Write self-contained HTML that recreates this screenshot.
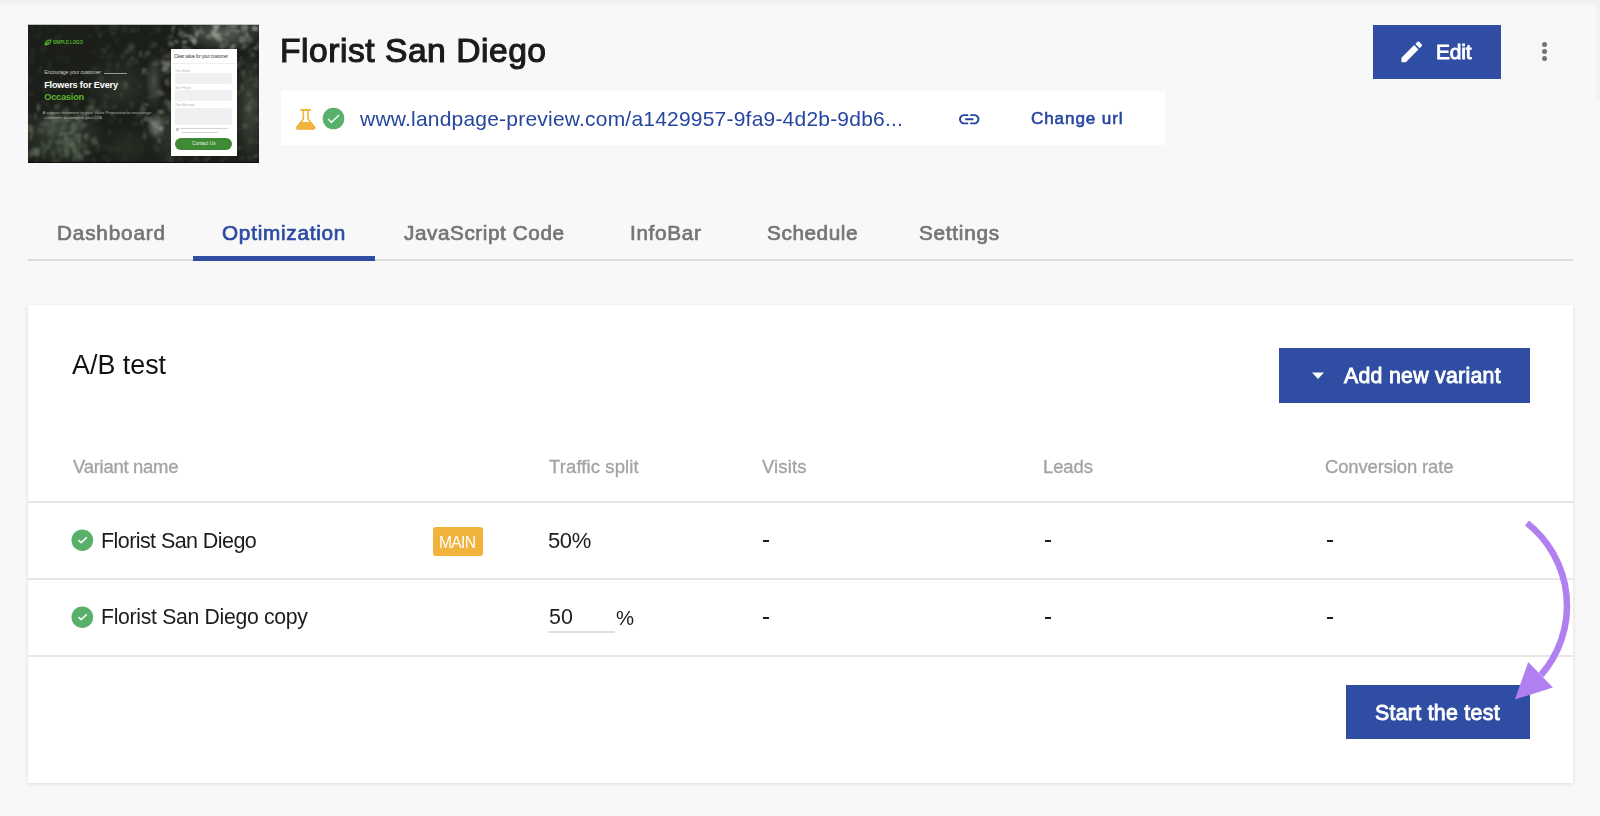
<!DOCTYPE html>
<html><head><meta charset="utf-8">
<style>
*{margin:0;padding:0;box-sizing:border-box}
html,body{width:1600px;height:816px;overflow:hidden;background:#f8f8f8;font-family:"Liberation Sans",sans-serif}
.a{position:absolute}
.t{position:absolute;white-space:nowrap;will-change:transform}
.btn{position:absolute;background:#2f4ea3}
</style></head>
<body>
<!-- thumbnail -->
<div class="a" id="thumb" style="left:28px;top:24px;width:231px;height:139px;background:#1b1e19;overflow:hidden">
 <div class="a" style="left:0;top:0;width:231px;height:139px;background:
  radial-gradient(ellipse 10px 14px at 128px 102px, rgba(205,210,205,.55), transparent),
  radial-gradient(ellipse 9px 30px at 126px 58px, rgba(150,160,155,.35), transparent),
  radial-gradient(ellipse 42px 18px at 195px 10px, rgba(165,172,160,.45), transparent),
  radial-gradient(ellipse 16px 60px at 222px 85px, rgba(105,120,100,.45), transparent),
  radial-gradient(ellipse 45px 32px at 35px 112px, rgba(85,100,80,.5), transparent),
  radial-gradient(ellipse 16px 12px at 22px 102px, rgba(120,135,140,.35), transparent),
  radial-gradient(ellipse 38px 32px at 92px 62px, rgba(72,82,66,.4), transparent),
  radial-gradient(ellipse 28px 22px at 100px 122px, rgba(62,76,56,.35), transparent),
  radial-gradient(ellipse 20px 40px at 140px 110px, rgba(80,95,80,.35), transparent)"></div>
 <svg class="a" style="left:0;top:0;filter:blur(.9px)" width="231" height="139" viewBox="0 0 231 139"><ellipse cx="22.7" cy="6.0" rx="3.1" ry="1.7" fill="rgba(70,80,65,0.15)"/><ellipse cx="25.6" cy="2.3" rx="2.8" ry="1.6" fill="rgba(70,80,65,0.14)"/><ellipse cx="4.9" cy="3.6" rx="2.6" ry="3.6" fill="rgba(70,80,65,0.10)"/><ellipse cx="15.6" cy="25.1" rx="3.9" ry="2.9" fill="rgba(70,80,65,0.14)"/><ellipse cx="68.3" cy="1.9" rx="3.6" ry="2.2" fill="rgba(70,80,65,0.11)"/><ellipse cx="8.2" cy="12.3" rx="3.5" ry="2.0" fill="rgba(70,80,65,0.16)"/><ellipse cx="44.7" cy="14.9" rx="2.9" ry="1.7" fill="rgba(70,80,65,0.10)"/><ellipse cx="14.4" cy="27.2" rx="2.6" ry="2.3" fill="rgba(70,80,65,0.16)"/><ellipse cx="31.7" cy="12.0" rx="3.5" ry="3.2" fill="rgba(70,80,65,0.12)"/><ellipse cx="40.2" cy="21.0" rx="3.7" ry="3.3" fill="rgba(70,80,65,0.12)"/><ellipse cx="68.6" cy="4.7" rx="2.5" ry="3.4" fill="rgba(70,80,65,0.11)"/><ellipse cx="34.2" cy="1.6" rx="3.2" ry="3.4" fill="rgba(70,80,65,0.16)"/><ellipse cx="61.3" cy="12.5" rx="3.2" ry="3.0" fill="rgba(70,80,65,0.16)"/><ellipse cx="31.9" cy="33.6" rx="3.9" ry="2.7" fill="rgba(70,80,65,0.17)"/><ellipse cx="4.2" cy="28.1" rx="3.1" ry="4.0" fill="rgba(70,80,65,0.19)"/><ellipse cx="19.9" cy="15.4" rx="3.2" ry="1.6" fill="rgba(70,80,65,0.15)"/><ellipse cx="11.8" cy="4.7" rx="1.6" ry="3.4" fill="rgba(70,80,65,0.11)"/><ellipse cx="17.3" cy="15.6" rx="3.7" ry="1.7" fill="rgba(70,80,65,0.14)"/><ellipse cx="38.5" cy="35.3" rx="3.5" ry="3.7" fill="rgba(70,80,65,0.12)"/><ellipse cx="29.1" cy="14.4" rx="3.7" ry="3.9" fill="rgba(70,80,65,0.11)"/><ellipse cx="12.3" cy="9.3" rx="2.1" ry="2.7" fill="rgba(70,80,65,0.16)"/><ellipse cx="18.4" cy="0.2" rx="2.5" ry="2.4" fill="rgba(70,80,65,0.16)"/><ellipse cx="66.7" cy="27.6" rx="2.8" ry="3.0" fill="rgba(70,80,65,0.17)"/><ellipse cx="3.8" cy="36.0" rx="3.4" ry="3.7" fill="rgba(70,80,65,0.19)"/><ellipse cx="27.5" cy="16.0" rx="1.8" ry="3.1" fill="rgba(70,80,65,0.10)"/><ellipse cx="74.9" cy="8.4" rx="1.9" ry="2.4" fill="rgba(90,100,85,0.13)"/><ellipse cx="70.0" cy="6.1" rx="1.8" ry="2.4" fill="rgba(90,100,85,0.12)"/><ellipse cx="133.8" cy="24.6" rx="1.9" ry="2.1" fill="rgba(90,100,85,0.17)"/><ellipse cx="96.6" cy="4.9" rx="3.6" ry="4.0" fill="rgba(90,100,85,0.19)"/><ellipse cx="105.3" cy="3.4" rx="1.8" ry="2.4" fill="rgba(90,100,85,0.16)"/><ellipse cx="130.5" cy="6.5" rx="1.6" ry="3.9" fill="rgba(90,100,85,0.20)"/><ellipse cx="80.7" cy="21.7" rx="1.6" ry="2.8" fill="rgba(90,100,85,0.27)"/><ellipse cx="133.0" cy="27.8" rx="2.2" ry="2.4" fill="rgba(90,100,85,0.15)"/><ellipse cx="126.4" cy="21.3" rx="3.4" ry="2.3" fill="rgba(90,100,85,0.15)"/><ellipse cx="129.2" cy="39.4" rx="3.6" ry="3.5" fill="rgba(90,100,85,0.24)"/><ellipse cx="124.0" cy="9.1" rx="2.8" ry="2.4" fill="rgba(90,100,85,0.12)"/><ellipse cx="72.0" cy="11.2" rx="2.1" ry="3.2" fill="rgba(90,100,85,0.26)"/><ellipse cx="102.6" cy="37.5" rx="4.0" ry="3.9" fill="rgba(90,100,85,0.17)"/><ellipse cx="86.1" cy="9.1" rx="2.0" ry="2.0" fill="rgba(90,100,85,0.21)"/><ellipse cx="135.7" cy="33.6" rx="2.7" ry="3.1" fill="rgba(90,100,85,0.24)"/><ellipse cx="76.2" cy="26.4" rx="3.8" ry="3.5" fill="rgba(90,100,85,0.23)"/><ellipse cx="104.9" cy="7.1" rx="3.5" ry="2.3" fill="rgba(90,100,85,0.24)"/><ellipse cx="140.9" cy="15.8" rx="2.5" ry="3.9" fill="rgba(90,100,85,0.23)"/><ellipse cx="82.4" cy="5.1" rx="1.9" ry="3.8" fill="rgba(90,100,85,0.24)"/><ellipse cx="80.7" cy="33.1" rx="4.0" ry="3.1" fill="rgba(90,100,85,0.17)"/><ellipse cx="110.1" cy="5.2" rx="1.5" ry="3.9" fill="rgba(90,100,85,0.22)"/><ellipse cx="108.4" cy="37.3" rx="2.6" ry="3.7" fill="rgba(90,100,85,0.24)"/><ellipse cx="85.4" cy="10.1" rx="2.2" ry="2.1" fill="rgba(90,100,85,0.21)"/><ellipse cx="88.9" cy="16.8" rx="1.8" ry="3.8" fill="rgba(90,100,85,0.17)"/><ellipse cx="103.4" cy="23.3" rx="3.8" ry="2.6" fill="rgba(90,100,85,0.26)"/><ellipse cx="106.6" cy="21.3" rx="2.8" ry="1.5" fill="rgba(90,100,85,0.19)"/><ellipse cx="83.4" cy="0.2" rx="3.5" ry="1.9" fill="rgba(90,100,85,0.19)"/><ellipse cx="122.9" cy="22.3" rx="2.3" ry="2.8" fill="rgba(90,100,85,0.20)"/><ellipse cx="127.3" cy="4.2" rx="2.9" ry="2.1" fill="rgba(90,100,85,0.16)"/><ellipse cx="126.4" cy="20.3" rx="2.9" ry="3.4" fill="rgba(90,100,85,0.26)"/><ellipse cx="102.4" cy="24.5" rx="2.8" ry="2.8" fill="rgba(90,100,85,0.22)"/><ellipse cx="103.0" cy="21.3" rx="2.7" ry="3.9" fill="rgba(90,100,85,0.22)"/><ellipse cx="134.0" cy="37.7" rx="2.1" ry="2.9" fill="rgba(90,100,85,0.26)"/><ellipse cx="131.3" cy="5.5" rx="1.8" ry="2.6" fill="rgba(90,100,85,0.13)"/><ellipse cx="87.6" cy="2.9" rx="3.2" ry="3.5" fill="rgba(90,100,85,0.25)"/><ellipse cx="156.6" cy="17.9" rx="3.0" ry="1.4" fill="rgba(180,185,175,0.42)"/><ellipse cx="228.1" cy="5.5" rx="3.9" ry="2.2" fill="rgba(180,185,175,0.33)"/><ellipse cx="230.1" cy="20.8" rx="1.5" ry="2.3" fill="rgba(180,185,175,0.33)"/><ellipse cx="172.8" cy="4.9" rx="2.0" ry="3.2" fill="rgba(180,185,175,0.21)"/><ellipse cx="191.8" cy="11.0" rx="1.1" ry="2.0" fill="rgba(180,185,175,0.36)"/><ellipse cx="188.1" cy="1.6" rx="4.0" ry="3.4" fill="rgba(180,185,175,0.44)"/><ellipse cx="152.2" cy="6.6" rx="1.1" ry="3.3" fill="rgba(180,185,175,0.27)"/><ellipse cx="154.4" cy="10.6" rx="3.7" ry="3.5" fill="rgba(180,185,175,0.27)"/><ellipse cx="156.1" cy="23.0" rx="2.7" ry="3.1" fill="rgba(180,185,175,0.23)"/><ellipse cx="148.1" cy="17.2" rx="2.3" ry="1.2" fill="rgba(180,185,175,0.44)"/><ellipse cx="198.8" cy="20.0" rx="1.3" ry="3.6" fill="rgba(180,185,175,0.23)"/><ellipse cx="218.9" cy="11.3" rx="2.0" ry="2.7" fill="rgba(180,185,175,0.43)"/><ellipse cx="166.6" cy="3.2" rx="2.6" ry="1.7" fill="rgba(180,185,175,0.24)"/><ellipse cx="157.2" cy="1.3" rx="1.6" ry="1.9" fill="rgba(180,185,175,0.28)"/><ellipse cx="209.8" cy="7.2" rx="2.5" ry="1.5" fill="rgba(180,185,175,0.29)"/><ellipse cx="144.6" cy="6.3" rx="1.0" ry="3.2" fill="rgba(180,185,175,0.34)"/><ellipse cx="159.7" cy="11.9" rx="3.8" ry="1.3" fill="rgba(180,185,175,0.41)"/><ellipse cx="181.0" cy="12.4" rx="3.5" ry="2.2" fill="rgba(180,185,175,0.33)"/><ellipse cx="203.5" cy="24.6" rx="2.0" ry="3.5" fill="rgba(180,185,175,0.38)"/><ellipse cx="199.0" cy="10.1" rx="2.0" ry="1.2" fill="rgba(180,185,175,0.24)"/><ellipse cx="149.2" cy="18.5" rx="1.8" ry="1.5" fill="rgba(180,185,175,0.23)"/><ellipse cx="217.0" cy="21.8" rx="3.0" ry="1.8" fill="rgba(180,185,175,0.27)"/><ellipse cx="168.8" cy="11.5" rx="1.5" ry="2.3" fill="rgba(180,185,175,0.27)"/><ellipse cx="227.6" cy="24.3" rx="2.6" ry="1.7" fill="rgba(180,185,175,0.44)"/><ellipse cx="170.2" cy="8.9" rx="1.0" ry="2.1" fill="rgba(180,185,175,0.32)"/><ellipse cx="187.2" cy="5.0" rx="2.5" ry="1.0" fill="rgba(180,185,175,0.27)"/><ellipse cx="150.9" cy="10.0" rx="1.1" ry="1.1" fill="rgba(180,185,175,0.28)"/><ellipse cx="163.5" cy="14.6" rx="2.6" ry="3.3" fill="rgba(180,185,175,0.37)"/><ellipse cx="206.0" cy="22.0" rx="2.2" ry="2.0" fill="rgba(180,185,175,0.45)"/><ellipse cx="156.2" cy="18.1" rx="2.9" ry="1.1" fill="rgba(180,185,175,0.41)"/><ellipse cx="221.5" cy="15.7" rx="3.2" ry="3.4" fill="rgba(180,185,175,0.24)"/><ellipse cx="189.1" cy="12.6" rx="3.5" ry="3.4" fill="rgba(180,185,175,0.41)"/><ellipse cx="194.4" cy="22.3" rx="3.0" ry="3.1" fill="rgba(180,185,175,0.27)"/><ellipse cx="145.7" cy="3.3" rx="2.1" ry="1.3" fill="rgba(180,185,175,0.41)"/><ellipse cx="192.2" cy="15.7" rx="2.9" ry="3.0" fill="rgba(180,185,175,0.33)"/><ellipse cx="143.3" cy="19.9" rx="3.2" ry="2.5" fill="rgba(180,185,175,0.34)"/><ellipse cx="201.0" cy="1.7" rx="3.2" ry="1.8" fill="rgba(180,185,175,0.23)"/><ellipse cx="166.4" cy="18.2" rx="1.6" ry="3.2" fill="rgba(180,185,175,0.44)"/><ellipse cx="186.5" cy="9.6" rx="2.4" ry="3.1" fill="rgba(180,185,175,0.39)"/><ellipse cx="197.3" cy="16.1" rx="1.2" ry="1.4" fill="rgba(180,185,175,0.27)"/><ellipse cx="208.4" cy="7.6" rx="2.7" ry="1.0" fill="rgba(180,185,175,0.22)"/><ellipse cx="166.7" cy="16.8" rx="3.1" ry="3.0" fill="rgba(180,185,175,0.28)"/><ellipse cx="188.5" cy="11.6" rx="2.4" ry="1.4" fill="rgba(180,185,175,0.42)"/><ellipse cx="160.5" cy="24.5" rx="3.8" ry="1.1" fill="rgba(180,185,175,0.32)"/><ellipse cx="215.2" cy="24.2" rx="2.3" ry="1.8" fill="rgba(180,185,175,0.26)"/><ellipse cx="226.2" cy="5.3" rx="2.7" ry="1.4" fill="rgba(180,185,175,0.34)"/><ellipse cx="226.8" cy="3.3" rx="3.5" ry="2.5" fill="rgba(180,185,175,0.42)"/><ellipse cx="204.9" cy="5.8" rx="3.7" ry="2.5" fill="rgba(180,185,175,0.22)"/><ellipse cx="143.3" cy="12.3" rx="2.4" ry="1.9" fill="rgba(180,185,175,0.24)"/><ellipse cx="173.3" cy="7.9" rx="3.5" ry="1.0" fill="rgba(180,185,175,0.39)"/><ellipse cx="216.8" cy="3.0" rx="3.8" ry="3.1" fill="rgba(180,185,175,0.43)"/><ellipse cx="168.5" cy="9.3" rx="2.2" ry="4.0" fill="rgba(180,185,175,0.35)"/><ellipse cx="174.7" cy="10.7" rx="1.8" ry="1.1" fill="rgba(180,185,175,0.23)"/><ellipse cx="216.5" cy="7.1" rx="3.8" ry="1.7" fill="rgba(180,185,175,0.27)"/><ellipse cx="188.0" cy="4.7" rx="2.1" ry="3.9" fill="rgba(180,185,175,0.42)"/><ellipse cx="214.5" cy="15.8" rx="3.7" ry="3.8" fill="rgba(180,185,175,0.34)"/><ellipse cx="206.3" cy="1.2" rx="3.2" ry="2.4" fill="rgba(180,185,175,0.39)"/><ellipse cx="199.7" cy="7.2" rx="1.1" ry="3.8" fill="rgba(180,185,175,0.24)"/><ellipse cx="184.6" cy="8.6" rx="1.9" ry="3.2" fill="rgba(180,185,175,0.44)"/><ellipse cx="165.9" cy="16.4" rx="1.9" ry="2.7" fill="rgba(180,185,175,0.30)"/><ellipse cx="11.7" cy="46.8" rx="2.0" ry="3.8" fill="rgba(75,88,70,0.19)"/><ellipse cx="15.4" cy="78.1" rx="4.0" ry="2.6" fill="rgba(75,88,70,0.14)"/><ellipse cx="13.5" cy="43.8" rx="2.4" ry="1.7" fill="rgba(75,88,70,0.16)"/><ellipse cx="18.1" cy="63.9" rx="3.7" ry="3.4" fill="rgba(75,88,70,0.18)"/><ellipse cx="29.0" cy="62.0" rx="2.4" ry="2.3" fill="rgba(75,88,70,0.13)"/><ellipse cx="19.4" cy="80.6" rx="1.8" ry="2.8" fill="rgba(75,88,70,0.21)"/><ellipse cx="60.4" cy="49.1" rx="2.2" ry="2.1" fill="rgba(75,88,70,0.18)"/><ellipse cx="31.2" cy="80.1" rx="3.6" ry="3.7" fill="rgba(75,88,70,0.12)"/><ellipse cx="2.3" cy="69.8" rx="3.7" ry="2.7" fill="rgba(75,88,70,0.21)"/><ellipse cx="0.0" cy="56.4" rx="3.8" ry="3.6" fill="rgba(75,88,70,0.25)"/><ellipse cx="68.1" cy="50.4" rx="1.8" ry="1.9" fill="rgba(75,88,70,0.20)"/><ellipse cx="47.7" cy="79.5" rx="3.3" ry="3.1" fill="rgba(75,88,70,0.23)"/><ellipse cx="32.0" cy="63.2" rx="1.6" ry="3.5" fill="rgba(75,88,70,0.15)"/><ellipse cx="64.4" cy="67.1" rx="2.3" ry="1.8" fill="rgba(75,88,70,0.16)"/><ellipse cx="44.5" cy="69.3" rx="1.8" ry="1.7" fill="rgba(75,88,70,0.20)"/><ellipse cx="40.8" cy="56.3" rx="2.1" ry="3.0" fill="rgba(75,88,70,0.12)"/><ellipse cx="21.1" cy="59.3" rx="3.9" ry="3.1" fill="rgba(75,88,70,0.25)"/><ellipse cx="33.3" cy="49.9" rx="2.1" ry="3.9" fill="rgba(75,88,70,0.23)"/><ellipse cx="21.5" cy="40.9" rx="2.7" ry="3.2" fill="rgba(75,88,70,0.18)"/><ellipse cx="18.0" cy="68.0" rx="3.8" ry="2.1" fill="rgba(75,88,70,0.13)"/><ellipse cx="23.7" cy="57.7" rx="3.2" ry="2.0" fill="rgba(75,88,70,0.24)"/><ellipse cx="51.7" cy="61.2" rx="2.0" ry="3.9" fill="rgba(75,88,70,0.17)"/><ellipse cx="57.4" cy="49.7" rx="2.1" ry="3.4" fill="rgba(75,88,70,0.16)"/><ellipse cx="66.6" cy="60.8" rx="2.0" ry="2.1" fill="rgba(75,88,70,0.18)"/><ellipse cx="46.6" cy="79.8" rx="1.9" ry="2.5" fill="rgba(75,88,70,0.15)"/><ellipse cx="68.2" cy="46.0" rx="1.6" ry="1.7" fill="rgba(75,88,70,0.18)"/><ellipse cx="62.9" cy="77.1" rx="3.3" ry="4.0" fill="rgba(75,88,70,0.26)"/><ellipse cx="23.0" cy="47.8" rx="3.8" ry="3.4" fill="rgba(75,88,70,0.12)"/><ellipse cx="46.5" cy="55.9" rx="2.4" ry="2.3" fill="rgba(75,88,70,0.15)"/><ellipse cx="0.2" cy="51.8" rx="2.4" ry="3.9" fill="rgba(75,88,70,0.14)"/><ellipse cx="140.2" cy="37.4" rx="2.4" ry="3.6" fill="rgba(95,108,90,0.27)"/><ellipse cx="98.7" cy="28.0" rx="2.7" ry="2.4" fill="rgba(95,108,90,0.29)"/><ellipse cx="80.1" cy="46.9" rx="3.7" ry="1.6" fill="rgba(95,108,90,0.19)"/><ellipse cx="128.3" cy="71.0" rx="1.6" ry="1.6" fill="rgba(95,108,90,0.13)"/><ellipse cx="136.8" cy="40.4" rx="3.4" ry="3.7" fill="rgba(95,108,90,0.18)"/><ellipse cx="86.2" cy="82.5" rx="3.0" ry="2.2" fill="rgba(95,108,90,0.25)"/><ellipse cx="89.7" cy="41.5" rx="1.5" ry="3.4" fill="rgba(95,108,90,0.28)"/><ellipse cx="114.5" cy="81.6" rx="1.6" ry="2.1" fill="rgba(95,108,90,0.21)"/><ellipse cx="139.6" cy="82.2" rx="2.5" ry="2.1" fill="rgba(95,108,90,0.20)"/><ellipse cx="103.5" cy="80.7" rx="2.0" ry="3.5" fill="rgba(95,108,90,0.25)"/><ellipse cx="129.2" cy="71.4" rx="3.0" ry="2.3" fill="rgba(95,108,90,0.18)"/><ellipse cx="93.2" cy="71.9" rx="1.7" ry="2.0" fill="rgba(95,108,90,0.26)"/><ellipse cx="84.3" cy="28.9" rx="1.6" ry="2.9" fill="rgba(95,108,90,0.18)"/><ellipse cx="141.5" cy="78.0" rx="4.0" ry="2.2" fill="rgba(95,108,90,0.14)"/><ellipse cx="72.5" cy="54.9" rx="3.3" ry="2.6" fill="rgba(95,108,90,0.16)"/><ellipse cx="97.5" cy="62.2" rx="3.2" ry="3.4" fill="rgba(95,108,90,0.27)"/><ellipse cx="116.8" cy="32.3" rx="3.6" ry="2.2" fill="rgba(95,108,90,0.22)"/><ellipse cx="94.1" cy="69.3" rx="2.0" ry="2.1" fill="rgba(95,108,90,0.16)"/><ellipse cx="77.0" cy="78.1" rx="2.9" ry="2.3" fill="rgba(95,108,90,0.19)"/><ellipse cx="142.4" cy="55.4" rx="2.1" ry="3.5" fill="rgba(95,108,90,0.24)"/><ellipse cx="142.3" cy="31.1" rx="2.7" ry="3.5" fill="rgba(95,108,90,0.27)"/><ellipse cx="136.3" cy="27.4" rx="2.2" ry="1.8" fill="rgba(95,108,90,0.15)"/><ellipse cx="140.9" cy="60.0" rx="3.8" ry="2.4" fill="rgba(95,108,90,0.28)"/><ellipse cx="100.0" cy="40.6" rx="3.4" ry="3.9" fill="rgba(95,108,90,0.14)"/><ellipse cx="111.5" cy="62.2" rx="2.0" ry="2.4" fill="rgba(95,108,90,0.15)"/><ellipse cx="80.9" cy="40.3" rx="3.0" ry="3.1" fill="rgba(95,108,90,0.16)"/><ellipse cx="65.9" cy="44.6" rx="3.2" ry="2.0" fill="rgba(95,108,90,0.18)"/><ellipse cx="80.9" cy="72.7" rx="2.9" ry="1.7" fill="rgba(95,108,90,0.14)"/><ellipse cx="95.8" cy="58.0" rx="3.1" ry="1.7" fill="rgba(95,108,90,0.15)"/><ellipse cx="119.2" cy="49.6" rx="2.2" ry="2.3" fill="rgba(95,108,90,0.29)"/><ellipse cx="89.4" cy="59.0" rx="2.4" ry="2.5" fill="rgba(95,108,90,0.28)"/><ellipse cx="142.7" cy="46.8" rx="2.0" ry="3.3" fill="rgba(95,108,90,0.16)"/><ellipse cx="65.5" cy="79.1" rx="2.6" ry="3.6" fill="rgba(95,108,90,0.19)"/><ellipse cx="133.9" cy="52.7" rx="1.9" ry="1.5" fill="rgba(95,108,90,0.22)"/><ellipse cx="115.0" cy="79.6" rx="1.7" ry="3.1" fill="rgba(95,108,90,0.19)"/><ellipse cx="104.3" cy="33.8" rx="2.2" ry="2.8" fill="rgba(95,108,90,0.29)"/><ellipse cx="73.5" cy="54.4" rx="3.5" ry="3.9" fill="rgba(95,108,90,0.16)"/><ellipse cx="74.9" cy="81.6" rx="3.9" ry="2.7" fill="rgba(95,108,90,0.13)"/><ellipse cx="137.2" cy="48.3" rx="3.8" ry="3.1" fill="rgba(95,108,90,0.27)"/><ellipse cx="77.5" cy="72.1" rx="2.1" ry="2.5" fill="rgba(95,108,90,0.27)"/><ellipse cx="129.7" cy="36.0" rx="2.0" ry="2.5" fill="rgba(95,108,90,0.21)"/><ellipse cx="94.9" cy="32.4" rx="2.1" ry="3.3" fill="rgba(95,108,90,0.28)"/><ellipse cx="68.2" cy="58.7" rx="3.4" ry="1.6" fill="rgba(95,108,90,0.27)"/><ellipse cx="74.2" cy="61.0" rx="2.9" ry="3.1" fill="rgba(95,108,90,0.18)"/><ellipse cx="97.8" cy="60.0" rx="2.6" ry="3.1" fill="rgba(95,108,90,0.20)"/><ellipse cx="99.2" cy="26.4" rx="3.0" ry="2.7" fill="rgba(95,108,90,0.16)"/><ellipse cx="124.6" cy="71.8" rx="2.6" ry="1.9" fill="rgba(95,108,90,0.21)"/><ellipse cx="73.4" cy="32.7" rx="2.6" ry="1.7" fill="rgba(95,108,90,0.20)"/><ellipse cx="104.8" cy="27.4" rx="3.1" ry="1.7" fill="rgba(95,108,90,0.25)"/><ellipse cx="125.7" cy="55.7" rx="1.6" ry="2.8" fill="rgba(95,108,90,0.19)"/><ellipse cx="140.5" cy="40.3" rx="3.1" ry="3.5" fill="rgba(185,190,185,0.33)"/><ellipse cx="136.4" cy="45.4" rx="3.5" ry="2.2" fill="rgba(185,190,185,0.38)"/><ellipse cx="139.5" cy="42.9" rx="3.0" ry="3.3" fill="rgba(185,190,185,0.17)"/><ellipse cx="122.5" cy="96.1" rx="1.4" ry="3.2" fill="rgba(185,190,185,0.22)"/><ellipse cx="136.5" cy="40.9" rx="2.3" ry="3.3" fill="rgba(185,190,185,0.20)"/><ellipse cx="119.9" cy="73.5" rx="1.8" ry="1.1" fill="rgba(185,190,185,0.19)"/><ellipse cx="116.8" cy="112.3" rx="2.7" ry="3.2" fill="rgba(185,190,185,0.19)"/><ellipse cx="135.5" cy="38.4" rx="2.3" ry="2.6" fill="rgba(185,190,185,0.24)"/><ellipse cx="138.2" cy="78.0" rx="2.5" ry="3.2" fill="rgba(185,190,185,0.18)"/><ellipse cx="141.8" cy="84.7" rx="2.0" ry="3.0" fill="rgba(185,190,185,0.21)"/><ellipse cx="141.7" cy="80.0" rx="1.9" ry="2.9" fill="rgba(185,190,185,0.26)"/><ellipse cx="117.3" cy="94.9" rx="1.1" ry="3.0" fill="rgba(185,190,185,0.21)"/><ellipse cx="131.2" cy="116.6" rx="2.5" ry="2.7" fill="rgba(185,190,185,0.23)"/><ellipse cx="112.1" cy="31.0" rx="1.4" ry="2.5" fill="rgba(185,190,185,0.25)"/><ellipse cx="127.4" cy="108.6" rx="1.3" ry="1.6" fill="rgba(185,190,185,0.31)"/><ellipse cx="112.7" cy="28.2" rx="1.9" ry="1.3" fill="rgba(185,190,185,0.24)"/><ellipse cx="118.7" cy="80.5" rx="2.5" ry="1.5" fill="rgba(185,190,185,0.30)"/><ellipse cx="126.2" cy="40.1" rx="3.3" ry="1.6" fill="rgba(185,190,185,0.19)"/><ellipse cx="114.9" cy="85.4" rx="3.2" ry="3.0" fill="rgba(185,190,185,0.25)"/><ellipse cx="119.9" cy="29.0" rx="2.6" ry="2.4" fill="rgba(185,190,185,0.23)"/><ellipse cx="131.4" cy="67.9" rx="3.3" ry="2.8" fill="rgba(185,190,185,0.21)"/><ellipse cx="139.1" cy="32.0" rx="2.3" ry="2.0" fill="rgba(185,190,185,0.21)"/><ellipse cx="113.8" cy="98.1" rx="1.0" ry="2.4" fill="rgba(185,190,185,0.38)"/><ellipse cx="116.3" cy="46.0" rx="2.5" ry="2.3" fill="rgba(185,190,185,0.30)"/><ellipse cx="136.4" cy="43.7" rx="1.8" ry="1.8" fill="rgba(185,190,185,0.16)"/><ellipse cx="138.7" cy="98.5" rx="2.8" ry="1.0" fill="rgba(185,190,185,0.35)"/><ellipse cx="134.4" cy="69.9" rx="2.9" ry="2.1" fill="rgba(185,190,185,0.20)"/><ellipse cx="115.2" cy="48.9" rx="1.1" ry="1.8" fill="rgba(185,190,185,0.33)"/><ellipse cx="132.9" cy="104.1" rx="2.8" ry="1.7" fill="rgba(185,190,185,0.28)"/><ellipse cx="125.1" cy="99.0" rx="2.3" ry="1.7" fill="rgba(185,190,185,0.30)"/><ellipse cx="141.0" cy="47.5" rx="3.2" ry="1.0" fill="rgba(185,190,185,0.21)"/><ellipse cx="119.1" cy="94.9" rx="3.4" ry="2.9" fill="rgba(185,190,185,0.23)"/><ellipse cx="138.4" cy="57.6" rx="1.6" ry="3.3" fill="rgba(185,190,185,0.30)"/><ellipse cx="132.8" cy="87.9" rx="3.4" ry="2.2" fill="rgba(185,190,185,0.35)"/><ellipse cx="132.9" cy="105.2" rx="2.1" ry="2.8" fill="rgba(185,190,185,0.29)"/><ellipse cx="22.2" cy="94.1" rx="3.4" ry="1.7" fill="rgba(105,122,100,0.40)"/><ellipse cx="10.4" cy="83.5" rx="1.8" ry="4.3" fill="rgba(105,122,100,0.28)"/><ellipse cx="10.2" cy="83.6" rx="1.6" ry="3.6" fill="rgba(105,122,100,0.34)"/><ellipse cx="50.2" cy="124.0" rx="1.7" ry="3.3" fill="rgba(105,122,100,0.29)"/><ellipse cx="58.9" cy="128.7" rx="4.2" ry="1.7" fill="rgba(105,122,100,0.39)"/><ellipse cx="65.8" cy="135.8" rx="1.8" ry="2.1" fill="rgba(105,122,100,0.23)"/><ellipse cx="2.5" cy="130.3" rx="3.9" ry="3.4" fill="rgba(105,122,100,0.38)"/><ellipse cx="45.5" cy="98.4" rx="1.8" ry="1.8" fill="rgba(105,122,100,0.37)"/><ellipse cx="14.8" cy="100.2" rx="2.8" ry="1.6" fill="rgba(105,122,100,0.26)"/><ellipse cx="20.3" cy="122.8" rx="2.6" ry="2.5" fill="rgba(105,122,100,0.41)"/><ellipse cx="36.3" cy="130.5" rx="3.4" ry="1.6" fill="rgba(105,122,100,0.30)"/><ellipse cx="31.4" cy="126.1" rx="2.5" ry="3.6" fill="rgba(105,122,100,0.32)"/><ellipse cx="15.6" cy="131.1" rx="1.8" ry="4.0" fill="rgba(105,122,100,0.25)"/><ellipse cx="0.1" cy="93.5" rx="3.8" ry="4.4" fill="rgba(105,122,100,0.21)"/><ellipse cx="35.3" cy="110.0" rx="3.9" ry="2.1" fill="rgba(105,122,100,0.31)"/><ellipse cx="25.0" cy="129.4" rx="2.3" ry="4.3" fill="rgba(105,122,100,0.27)"/><ellipse cx="15.5" cy="121.9" rx="3.0" ry="1.8" fill="rgba(105,122,100,0.34)"/><ellipse cx="5.8" cy="126.9" rx="3.6" ry="3.9" fill="rgba(105,122,100,0.34)"/><ellipse cx="25.6" cy="104.9" rx="2.7" ry="4.2" fill="rgba(105,122,100,0.23)"/><ellipse cx="64.0" cy="83.4" rx="2.1" ry="2.3" fill="rgba(105,122,100,0.40)"/><ellipse cx="36.1" cy="103.6" rx="4.2" ry="2.2" fill="rgba(105,122,100,0.31)"/><ellipse cx="38.3" cy="125.0" rx="3.8" ry="3.4" fill="rgba(105,122,100,0.28)"/><ellipse cx="23.5" cy="90.9" rx="4.0" ry="3.5" fill="rgba(105,122,100,0.37)"/><ellipse cx="12.2" cy="107.0" rx="3.8" ry="3.2" fill="rgba(105,122,100,0.24)"/><ellipse cx="33.3" cy="132.5" rx="2.2" ry="2.1" fill="rgba(105,122,100,0.27)"/><ellipse cx="50.6" cy="130.1" rx="2.0" ry="2.0" fill="rgba(105,122,100,0.26)"/><ellipse cx="23.5" cy="111.8" rx="2.0" ry="2.5" fill="rgba(105,122,100,0.25)"/><ellipse cx="70.2" cy="123.5" rx="1.8" ry="4.4" fill="rgba(105,122,100,0.23)"/><ellipse cx="27.7" cy="138.1" rx="3.9" ry="3.7" fill="rgba(105,122,100,0.30)"/><ellipse cx="14.1" cy="118.4" rx="1.8" ry="2.1" fill="rgba(105,122,100,0.29)"/><ellipse cx="2.4" cy="104.7" rx="3.9" ry="3.6" fill="rgba(105,122,100,0.32)"/><ellipse cx="45.5" cy="108.4" rx="1.9" ry="3.3" fill="rgba(105,122,100,0.29)"/><ellipse cx="53.3" cy="133.8" rx="2.8" ry="3.2" fill="rgba(105,122,100,0.37)"/><ellipse cx="30.3" cy="95.0" rx="3.7" ry="4.1" fill="rgba(105,122,100,0.37)"/><ellipse cx="50.4" cy="130.6" rx="3.5" ry="3.4" fill="rgba(105,122,100,0.31)"/><ellipse cx="22.5" cy="117.8" rx="1.8" ry="2.8" fill="rgba(105,122,100,0.37)"/><ellipse cx="51.3" cy="117.9" rx="2.3" ry="2.8" fill="rgba(105,122,100,0.31)"/><ellipse cx="44.8" cy="105.3" rx="3.5" ry="4.3" fill="rgba(105,122,100,0.25)"/><ellipse cx="47.1" cy="126.4" rx="2.7" ry="3.0" fill="rgba(105,122,100,0.41)"/><ellipse cx="2.7" cy="113.0" rx="2.0" ry="3.8" fill="rgba(105,122,100,0.41)"/><ellipse cx="37.4" cy="87.8" rx="3.2" ry="3.1" fill="rgba(105,122,100,0.36)"/><ellipse cx="36.9" cy="118.4" rx="4.0" ry="3.1" fill="rgba(105,122,100,0.30)"/><ellipse cx="68.3" cy="94.0" rx="3.6" ry="2.7" fill="rgba(105,122,100,0.37)"/><ellipse cx="8.8" cy="138.1" rx="2.6" ry="1.7" fill="rgba(105,122,100,0.27)"/><ellipse cx="28.8" cy="82.8" rx="2.8" ry="2.8" fill="rgba(105,122,100,0.36)"/><ellipse cx="25.4" cy="97.1" rx="2.2" ry="3.7" fill="rgba(105,122,100,0.41)"/><ellipse cx="37.9" cy="94.5" rx="3.9" ry="2.7" fill="rgba(105,122,100,0.25)"/><ellipse cx="9.3" cy="126.3" rx="3.9" ry="3.4" fill="rgba(105,122,100,0.31)"/><ellipse cx="40.5" cy="94.9" rx="4.4" ry="2.6" fill="rgba(105,122,100,0.34)"/><ellipse cx="58.9" cy="128.5" rx="2.9" ry="2.4" fill="rgba(105,122,100,0.33)"/><ellipse cx="9.0" cy="129.5" rx="2.6" ry="4.1" fill="rgba(105,122,100,0.27)"/><ellipse cx="27.1" cy="96.5" rx="2.8" ry="2.1" fill="rgba(105,122,100,0.21)"/><ellipse cx="52.0" cy="98.0" rx="2.2" ry="2.4" fill="rgba(105,122,100,0.31)"/><ellipse cx="30.9" cy="118.3" rx="3.5" ry="2.6" fill="rgba(105,122,100,0.41)"/><ellipse cx="61.5" cy="85.3" rx="4.0" ry="4.2" fill="rgba(105,122,100,0.37)"/><ellipse cx="10.1" cy="129.4" rx="3.4" ry="1.5" fill="rgba(105,122,100,0.21)"/><ellipse cx="68.5" cy="119.4" rx="2.3" ry="1.8" fill="rgba(105,122,100,0.24)"/><ellipse cx="16.8" cy="126.2" rx="2.5" ry="2.0" fill="rgba(105,122,100,0.40)"/><ellipse cx="57.0" cy="91.6" rx="4.2" ry="3.3" fill="rgba(105,122,100,0.37)"/><ellipse cx="48.1" cy="133.0" rx="3.9" ry="4.0" fill="rgba(105,122,100,0.25)"/><ellipse cx="49.9" cy="112.3" rx="3.7" ry="2.8" fill="rgba(105,122,100,0.40)"/><ellipse cx="40.0" cy="97.1" rx="2.2" ry="1.9" fill="rgba(105,122,100,0.31)"/><ellipse cx="4.2" cy="108.6" rx="1.9" ry="3.0" fill="rgba(105,122,100,0.31)"/><ellipse cx="38.8" cy="131.2" rx="1.5" ry="4.0" fill="rgba(105,122,100,0.31)"/><ellipse cx="40.5" cy="119.9" rx="4.0" ry="2.6" fill="rgba(105,122,100,0.30)"/><ellipse cx="69.2" cy="86.3" rx="3.4" ry="3.4" fill="rgba(105,122,100,0.22)"/><ellipse cx="43.9" cy="120.9" rx="4.3" ry="2.5" fill="rgba(105,122,100,0.42)"/><ellipse cx="36.8" cy="109.6" rx="4.2" ry="1.6" fill="rgba(105,122,100,0.36)"/><ellipse cx="45.0" cy="101.3" rx="4.1" ry="2.6" fill="rgba(105,122,100,0.31)"/><ellipse cx="37.8" cy="125.9" rx="2.1" ry="2.8" fill="rgba(105,122,100,0.30)"/><ellipse cx="39.9" cy="129.1" rx="2.4" ry="4.0" fill="rgba(105,122,100,0.29)"/><ellipse cx="36.3" cy="97.5" rx="3.0" ry="4.4" fill="rgba(105,122,100,0.35)"/><ellipse cx="57.0" cy="100.9" rx="2.5" ry="2.4" fill="rgba(105,122,100,0.33)"/><ellipse cx="45.7" cy="126.7" rx="1.6" ry="3.7" fill="rgba(105,122,100,0.40)"/><ellipse cx="39.3" cy="84.8" rx="2.4" ry="1.5" fill="rgba(105,122,100,0.25)"/><ellipse cx="66.3" cy="116.7" rx="3.5" ry="3.9" fill="rgba(105,122,100,0.40)"/><ellipse cx="44.0" cy="117.2" rx="3.4" ry="3.6" fill="rgba(105,122,100,0.34)"/><ellipse cx="49.0" cy="94.1" rx="3.5" ry="2.9" fill="rgba(105,122,100,0.37)"/><ellipse cx="7.3" cy="92.3" rx="1.6" ry="3.8" fill="rgba(105,122,100,0.40)"/><ellipse cx="47.2" cy="103.0" rx="4.0" ry="3.9" fill="rgba(105,122,100,0.33)"/><ellipse cx="18.6" cy="99.2" rx="2.8" ry="2.5" fill="rgba(105,122,100,0.30)"/><ellipse cx="46.2" cy="135.2" rx="1.7" ry="3.2" fill="rgba(105,122,100,0.22)"/><ellipse cx="8.6" cy="128.2" rx="3.2" ry="4.3" fill="rgba(105,122,100,0.30)"/><ellipse cx="1.0" cy="104.1" rx="3.3" ry="4.3" fill="rgba(105,122,100,0.42)"/><ellipse cx="34.2" cy="105.5" rx="1.8" ry="3.4" fill="rgba(105,122,100,0.25)"/><ellipse cx="10.9" cy="82.9" rx="1.5" ry="3.6" fill="rgba(105,122,100,0.24)"/><ellipse cx="69.6" cy="87.0" rx="4.1" ry="1.9" fill="rgba(105,122,100,0.21)"/><ellipse cx="51.8" cy="95.8" rx="3.7" ry="2.1" fill="rgba(105,122,100,0.22)"/><ellipse cx="55.7" cy="122.7" rx="4.1" ry="3.7" fill="rgba(105,122,100,0.23)"/><ellipse cx="45.3" cy="122.4" rx="2.9" ry="4.3" fill="rgba(105,122,100,0.26)"/><ellipse cx="58.2" cy="111.5" rx="1.5" ry="1.5" fill="rgba(140,155,160,0.25)"/><ellipse cx="50.9" cy="92.4" rx="2.0" ry="2.6" fill="rgba(140,155,160,0.17)"/><ellipse cx="53.0" cy="104.6" rx="1.6" ry="2.1" fill="rgba(140,155,160,0.24)"/><ellipse cx="31.9" cy="110.3" rx="1.7" ry="2.7" fill="rgba(140,155,160,0.20)"/><ellipse cx="42.2" cy="108.9" rx="2.1" ry="2.1" fill="rgba(140,155,160,0.27)"/><ellipse cx="57.2" cy="113.5" rx="2.4" ry="1.9" fill="rgba(140,155,160,0.16)"/><ellipse cx="58.7" cy="111.1" rx="2.7" ry="2.0" fill="rgba(140,155,160,0.24)"/><ellipse cx="58.9" cy="114.9" rx="2.4" ry="2.0" fill="rgba(140,155,160,0.21)"/><ellipse cx="54.4" cy="101.3" rx="2.5" ry="2.4" fill="rgba(140,155,160,0.28)"/><ellipse cx="50.4" cy="98.5" rx="1.5" ry="1.9" fill="rgba(140,155,160,0.21)"/><ellipse cx="39.3" cy="114.5" rx="2.8" ry="1.6" fill="rgba(140,155,160,0.27)"/><ellipse cx="50.6" cy="116.0" rx="2.4" ry="1.9" fill="rgba(140,155,160,0.28)"/><ellipse cx="50.4" cy="110.5" rx="2.9" ry="2.0" fill="rgba(140,155,160,0.16)"/><ellipse cx="37.7" cy="113.9" rx="1.8" ry="2.6" fill="rgba(140,155,160,0.29)"/><ellipse cx="21.7" cy="108.2" rx="2.5" ry="2.2" fill="rgba(140,155,160,0.18)"/><ellipse cx="90.1" cy="124.8" rx="3.5" ry="2.6" fill="rgba(80,95,75,0.13)"/><ellipse cx="129.3" cy="126.0" rx="2.1" ry="2.9" fill="rgba(80,95,75,0.25)"/><ellipse cx="134.8" cy="111.7" rx="2.7" ry="3.0" fill="rgba(80,95,75,0.15)"/><ellipse cx="85.7" cy="92.3" rx="3.3" ry="2.4" fill="rgba(80,95,75,0.20)"/><ellipse cx="100.6" cy="111.5" rx="1.9" ry="1.6" fill="rgba(80,95,75,0.27)"/><ellipse cx="98.6" cy="88.0" rx="3.1" ry="3.5" fill="rgba(80,95,75,0.14)"/><ellipse cx="114.4" cy="101.7" rx="2.8" ry="1.6" fill="rgba(80,95,75,0.13)"/><ellipse cx="142.3" cy="131.4" rx="2.7" ry="2.9" fill="rgba(80,95,75,0.16)"/><ellipse cx="127.3" cy="106.3" rx="3.9" ry="3.4" fill="rgba(80,95,75,0.24)"/><ellipse cx="140.4" cy="96.5" rx="1.6" ry="2.0" fill="rgba(80,95,75,0.15)"/><ellipse cx="77.9" cy="84.9" rx="2.9" ry="3.7" fill="rgba(80,95,75,0.19)"/><ellipse cx="139.3" cy="133.9" rx="1.7" ry="3.0" fill="rgba(80,95,75,0.18)"/><ellipse cx="80.5" cy="136.7" rx="2.1" ry="2.9" fill="rgba(80,95,75,0.22)"/><ellipse cx="139.9" cy="120.2" rx="2.5" ry="2.6" fill="rgba(80,95,75,0.14)"/><ellipse cx="140.6" cy="138.5" rx="2.1" ry="1.6" fill="rgba(80,95,75,0.16)"/><ellipse cx="97.0" cy="133.5" rx="3.8" ry="3.6" fill="rgba(80,95,75,0.13)"/><ellipse cx="127.8" cy="122.4" rx="3.1" ry="4.0" fill="rgba(80,95,75,0.13)"/><ellipse cx="82.3" cy="125.0" rx="3.8" ry="3.2" fill="rgba(80,95,75,0.16)"/><ellipse cx="114.0" cy="125.2" rx="1.8" ry="2.3" fill="rgba(80,95,75,0.16)"/><ellipse cx="80.8" cy="109.4" rx="1.9" ry="2.1" fill="rgba(80,95,75,0.14)"/><ellipse cx="120.1" cy="82.7" rx="3.3" ry="2.0" fill="rgba(80,95,75,0.13)"/><ellipse cx="137.9" cy="94.6" rx="3.8" ry="3.7" fill="rgba(80,95,75,0.25)"/><ellipse cx="81.9" cy="107.5" rx="1.7" ry="3.8" fill="rgba(80,95,75,0.25)"/><ellipse cx="116.6" cy="107.8" rx="2.3" ry="3.6" fill="rgba(80,95,75,0.19)"/><ellipse cx="116.6" cy="90.1" rx="2.1" ry="1.6" fill="rgba(80,95,75,0.23)"/><ellipse cx="111.3" cy="90.2" rx="3.7" ry="2.2" fill="rgba(80,95,75,0.18)"/><ellipse cx="83.1" cy="97.5" rx="3.6" ry="2.3" fill="rgba(80,95,75,0.15)"/><ellipse cx="106.9" cy="100.1" rx="3.8" ry="1.8" fill="rgba(80,95,75,0.27)"/><ellipse cx="76.0" cy="133.0" rx="3.2" ry="2.0" fill="rgba(80,95,75,0.19)"/><ellipse cx="92.3" cy="96.7" rx="2.0" ry="2.4" fill="rgba(80,95,75,0.27)"/><ellipse cx="142.9" cy="134.7" rx="1.7" ry="2.2" fill="rgba(80,95,75,0.25)"/><ellipse cx="76.1" cy="123.4" rx="2.2" ry="3.9" fill="rgba(80,95,75,0.12)"/><ellipse cx="129.3" cy="101.4" rx="1.9" ry="1.5" fill="rgba(80,95,75,0.24)"/><ellipse cx="109.4" cy="92.6" rx="2.6" ry="3.8" fill="rgba(80,95,75,0.15)"/><ellipse cx="112.6" cy="89.9" rx="2.0" ry="3.4" fill="rgba(80,95,75,0.23)"/><ellipse cx="213.3" cy="34.0" rx="1.2" ry="2.5" fill="rgba(120,135,115,0.24)"/><ellipse cx="215.0" cy="48.5" rx="2.5" ry="2.8" fill="rgba(120,135,115,0.30)"/><ellipse cx="221.8" cy="48.1" rx="1.2" ry="2.8" fill="rgba(120,135,115,0.22)"/><ellipse cx="224.9" cy="31.3" rx="3.0" ry="1.8" fill="rgba(120,135,115,0.30)"/><ellipse cx="228.0" cy="81.2" rx="1.0" ry="3.3" fill="rgba(120,135,115,0.24)"/><ellipse cx="228.2" cy="55.4" rx="1.5" ry="3.1" fill="rgba(120,135,115,0.22)"/><ellipse cx="212.6" cy="67.3" rx="2.5" ry="1.0" fill="rgba(120,135,115,0.24)"/><ellipse cx="218.8" cy="83.8" rx="1.3" ry="2.8" fill="rgba(120,135,115,0.30)"/><ellipse cx="228.0" cy="61.6" rx="2.8" ry="2.0" fill="rgba(120,135,115,0.29)"/><ellipse cx="210.3" cy="124.5" rx="3.4" ry="2.2" fill="rgba(120,135,115,0.24)"/><ellipse cx="220.7" cy="86.3" rx="1.1" ry="3.4" fill="rgba(120,135,115,0.19)"/><ellipse cx="213.0" cy="36.7" rx="1.6" ry="3.0" fill="rgba(120,135,115,0.16)"/><ellipse cx="211.1" cy="104.7" rx="1.5" ry="1.0" fill="rgba(120,135,115,0.26)"/><ellipse cx="221.7" cy="84.6" rx="2.8" ry="1.3" fill="rgba(120,135,115,0.31)"/><ellipse cx="224.8" cy="30.1" rx="1.3" ry="2.2" fill="rgba(120,135,115,0.24)"/><ellipse cx="215.2" cy="38.9" rx="2.0" ry="1.3" fill="rgba(120,135,115,0.26)"/><ellipse cx="227.9" cy="41.8" rx="2.4" ry="2.9" fill="rgba(120,135,115,0.18)"/><ellipse cx="227.2" cy="131.9" rx="2.0" ry="2.1" fill="rgba(120,135,115,0.30)"/><ellipse cx="220.6" cy="70.1" rx="3.4" ry="2.9" fill="rgba(120,135,115,0.21)"/><ellipse cx="214.3" cy="63.2" rx="2.1" ry="3.5" fill="rgba(120,135,115,0.29)"/><ellipse cx="229.1" cy="117.9" rx="3.1" ry="1.1" fill="rgba(120,135,115,0.24)"/><ellipse cx="230.1" cy="131.5" rx="1.6" ry="2.1" fill="rgba(120,135,115,0.26)"/><ellipse cx="217.0" cy="85.5" rx="1.2" ry="2.1" fill="rgba(120,135,115,0.24)"/><ellipse cx="209.5" cy="40.9" rx="3.4" ry="2.9" fill="rgba(120,135,115,0.32)"/><ellipse cx="222.9" cy="117.3" rx="3.2" ry="3.2" fill="rgba(120,135,115,0.16)"/><ellipse cx="223.1" cy="55.3" rx="2.7" ry="1.7" fill="rgba(120,135,115,0.25)"/><ellipse cx="229.3" cy="95.8" rx="1.6" ry="2.3" fill="rgba(120,135,115,0.23)"/><ellipse cx="229.9" cy="57.8" rx="1.8" ry="2.6" fill="rgba(120,135,115,0.17)"/><ellipse cx="222.1" cy="134.0" rx="2.3" ry="1.7" fill="rgba(120,135,115,0.23)"/><ellipse cx="220.7" cy="41.9" rx="1.3" ry="1.3" fill="rgba(120,135,115,0.20)"/><ellipse cx="217.9" cy="57.9" rx="1.6" ry="1.2" fill="rgba(120,135,115,0.25)"/><ellipse cx="227.5" cy="94.5" rx="2.4" ry="2.6" fill="rgba(120,135,115,0.19)"/><ellipse cx="224.6" cy="77.5" rx="2.4" ry="2.5" fill="rgba(120,135,115,0.23)"/><ellipse cx="215.8" cy="52.6" rx="1.6" ry="2.3" fill="rgba(120,135,115,0.22)"/><ellipse cx="221.9" cy="26.4" rx="1.9" ry="3.2" fill="rgba(120,135,115,0.19)"/><ellipse cx="221.2" cy="81.0" rx="1.7" ry="3.5" fill="rgba(120,135,115,0.20)"/><ellipse cx="226.0" cy="43.1" rx="1.2" ry="3.2" fill="rgba(120,135,115,0.23)"/><ellipse cx="210.4" cy="69.2" rx="2.1" ry="2.8" fill="rgba(120,135,115,0.17)"/><ellipse cx="214.0" cy="134.4" rx="2.8" ry="1.4" fill="rgba(120,135,115,0.21)"/><ellipse cx="216.8" cy="102.0" rx="2.5" ry="3.1" fill="rgba(120,135,115,0.30)"/><ellipse cx="177.2" cy="136.6" rx="2.5" ry="2.5" fill="rgba(110,120,105,0.18)"/><ellipse cx="194.8" cy="136.4" rx="2.8" ry="1.3" fill="rgba(110,120,105,0.22)"/><ellipse cx="143.3" cy="136.9" rx="2.2" ry="2.0" fill="rgba(110,120,105,0.24)"/><ellipse cx="180.7" cy="133.8" rx="2.6" ry="2.7" fill="rgba(110,120,105,0.19)"/><ellipse cx="168.1" cy="134.1" rx="1.9" ry="2.4" fill="rgba(110,120,105,0.16)"/><ellipse cx="168.8" cy="135.0" rx="1.8" ry="1.6" fill="rgba(110,120,105,0.21)"/><ellipse cx="199.1" cy="134.5" rx="1.9" ry="1.4" fill="rgba(110,120,105,0.16)"/><ellipse cx="152.6" cy="135.2" rx="2.2" ry="1.2" fill="rgba(110,120,105,0.23)"/><ellipse cx="164.4" cy="137.6" rx="2.7" ry="2.9" fill="rgba(110,120,105,0.14)"/><ellipse cx="171.1" cy="138.2" rx="1.0" ry="1.1" fill="rgba(110,120,105,0.19)"/></svg>
 <div class="a" style="left:0;top:0;width:231px;height:1px;background:#bfc0bd"></div>
 <div class="a" style="left:0;top:138px;width:231px;height:1px;background:#0e0f0d"></div>
 <svg class="a" style="left:16px;top:15px" width="8" height="7" viewBox="0 0 8 7"><path d="M1 6 C1 2 4 1 7 1 C7 4 5 6 1 6Z M1 6 L5 3" fill="none" stroke="#4caf2a" stroke-width="1.1"/></svg>
 <div class="a" style="left:24.7px;top:16.3px;font-size:4.6px;font-weight:bold;color:#4caf2a;line-height:5px;white-space:nowrap;letter-spacing:-.15px">SIMPLE LOGO</div>
 <div class="a" style="left:16.2px;top:45.3px;font-size:5.4px;color:#c4c4c4;line-height:6px;white-space:nowrap;letter-spacing:-.22px">Encourage your customer</div>
 <div class="a" style="left:76.3px;top:48.5px;width:22.5px;height:1px;background:#9a9a9a"></div>
 <div class="a" style="left:16.2px;top:56.2px;font-size:9.2px;font-weight:bold;color:#fff;line-height:10px;white-space:nowrap;letter-spacing:-.2px">Flowers for Every</div>
 <div class="a" style="left:16.2px;top:68.2px;font-size:9.2px;font-weight:bold;color:#5cb531;line-height:10px;white-space:nowrap;letter-spacing:-.2px">Occasion</div>
 <div class="a" style="left:14.5px;top:86.3px;font-size:4.3px;color:#a9aca8;line-height:5px;white-space:nowrap;letter-spacing:-.08px">A support statement to your Value Proposition to encourage</div>
 <div class="a" style="left:16.2px;top:91px;font-size:4.2px;color:#a9aca8;line-height:5px;white-space:nowrap;letter-spacing:-.1px">customers to complete your CTA</div>
 <div class="a" style="left:143px;top:24.7px;width:66.2px;height:107.3px;background:#fff">
  <div class="a" style="left:3.1px;top:5.2px;font-size:4.5px;color:#333;line-height:5px;white-space:nowrap;letter-spacing:-.18px">Clear value for your customer</div>
  <div class="a" style="left:0;top:14.3px;width:66px;height:1px;background:#f0f0f0"></div>
  <div class="a" style="left:4.3px;top:19.9px;font-size:3px;color:#b0b0b0;line-height:4px;white-space:nowrap">Your Email</div>
  <div class="a" style="left:4.3px;top:24.2px;width:57px;height:11.1px;background:#eff0f2;border-radius:1.5px"></div>
  <div class="a" style="left:4.3px;top:37.3px;font-size:3px;color:#b0b0b0;line-height:4px;white-space:nowrap">Your Phone</div>
  <div class="a" style="left:4.3px;top:41.7px;width:57px;height:10.8px;background:#eff0f2;border-radius:1.5px"></div>
  <div class="a" style="left:4.3px;top:54.8px;font-size:3px;color:#b0b0b0;line-height:4px;white-space:nowrap">Your Message</div>
  <div class="a" style="left:4.3px;top:59.1px;width:57px;height:17.1px;background:#eff0f2;border-radius:1.5px"></div>
  <div class="a" style="left:5px;top:79.3px;width:2.6px;height:2.6px;border:.4px solid #999;border-radius:50%"></div>
  <div class="a" style="left:9.2px;top:79.6px;width:48px;height:1.2px;background:#d6d6d6"></div>
  <div class="a" style="left:11px;top:83.3px;width:36px;height:1.2px;background:#d6d6d6"></div>
  <div class="a" style="left:4.3px;top:89.1px;width:57px;height:11.8px;background:#3f8a34;border-radius:6px"></div>
  <div class="a" style="left:4.3px;top:89.1px;width:57px;font-size:4.8px;color:#e8f2e6;line-height:11.8px;text-align:center;white-space:nowrap">Contact Us</div>
 </div>
</div>

<!-- url bar -->
<div class="a" style="left:281px;top:91px;width:884px;height:54px;background:#fff"></div>

<!-- edit -->
<div class="btn" style="left:1373px;top:25px;width:128px;height:54px"></div>

<!-- tabs -->
<div class="a" style="left:28px;top:259px;width:1545px;height:2px;background:#dcdcdc"></div>
<div class="a" style="left:193px;top:256px;width:182px;height:5px;background:#2f4ea3"></div>

<!-- card -->
<div class="a" style="left:28px;top:305px;width:1545px;height:478px;background:#fff;box-shadow:0 1px 4px rgba(0,0,0,.12)"></div>
<div class="btn" style="left:1279px;top:348px;width:251px;height:55px"></div>

<div class="a" style="left:28px;top:501px;width:1545px;height:2px;background:#e6e6e6"></div>
<div class="a" style="left:28px;top:578px;width:1545px;height:2px;background:#e6e6e6"></div>
<div class="a" style="left:28px;top:655px;width:1545px;height:2px;background:#e6e6e6"></div>

<div class="a" style="left:433px;top:527px;width:50px;height:29px;background:#f2b33d;border-radius:3px"></div>
<div class="a" style="left:548px;top:631px;width:67px;height:2px;background:#e0e0e0"></div>

<div class="a" style="left:763px;top:540px;width:6px;height:2px;background:#1c1c1c"></div>
<div class="a" style="left:1045px;top:540px;width:6px;height:2px;background:#1c1c1c"></div>
<div class="a" style="left:1327px;top:540px;width:6px;height:2px;background:#1c1c1c"></div>
<div class="a" style="left:763px;top:617px;width:6px;height:2px;background:#1c1c1c"></div>
<div class="a" style="left:1045px;top:617px;width:6px;height:2px;background:#1c1c1c"></div>
<div class="a" style="left:1327px;top:617px;width:6px;height:2px;background:#1c1c1c"></div>

<div class="btn" style="left:1346px;top:685px;width:184px;height:54px"></div>


<!-- flask -->
<svg class="a" style="left:294px;top:107px" width="24" height="24" viewBox="294 107 24 24">
 <path d="M301.2 109.9 H309.9" stroke="#f2b33d" stroke-width="2" stroke-linecap="round" fill="none"/>
 <path d="M303.4 110.5 V119 L296.8 127.3 Q296.2 128.9 298 128.9 H313.4 Q315.2 128.9 314.6 127.3 L308 119 V110.5" stroke="#f2b33d" stroke-width="1.6" fill="none" stroke-linejoin="round"/>
 <path d="M300.6 122 H310.8 L314.8 127.3 Q315.4 129.2 313.4 129.2 H298 Q296 129.2 296.6 127.3 Z" fill="#f2b33d"/>
</svg>
<!-- top check -->
<svg class="a" style="left:322px;top:107px" width="24" height="24" viewBox="322 107 24 24">
 <circle cx="333.5" cy="118.5" r="10.8" fill="#58b06b"/>
 <path d="M328.2 119.1 L331.4 122.4 L339.1 115" stroke="#eef7f0" stroke-width="1.5" fill="none"/>
</svg>
<!-- link -->
<svg class="a" style="left:957px;top:106.5px" width="24.5" height="24.5" viewBox="0 0 24 24">
 <path fill="#2645a0" d="M3.9 12c0-1.71 1.39-3.1 3.1-3.1h4V7H7c-2.76 0-5 2.24-5 5s2.24 5 5 5h4v-1.9H7c-1.71 0-3.1-1.39-3.1-3.1zM8 13h8v-2H8v2zm9-6h-4v1.9h4c1.710 0 3.1 1.39 3.1 3.1s-1.39 3.1-3.1 3.1h-4V17h4c2.76 0 5-2.24 5-5s-2.24-5-5-5z"/>
</svg>
<!-- pencil -->
<svg class="a" style="left:1397.85px;top:38.45px" width="27.6" height="27.6" viewBox="0 0 24 24">
 <path fill="#fff" d="M3 17.25V21h3.75L17.81 9.94l-3.75-3.75L3 17.25zM20.71 7.04c.39-.39.39-1.02 0-1.41l-2.34-2.34c-.39-.39-1.02-.39-1.410 0l-1.83 1.83 3.75 3.75 1.83-1.83z"/>
</svg>
<!-- kebab -->
<div class="a" style="left:1542px;top:41.9px;width:5.1px;height:5.1px;border-radius:50%;background:#757575"></div>
<div class="a" style="left:1542px;top:48.9px;width:5.1px;height:5.1px;border-radius:50%;background:#757575"></div>
<div class="a" style="left:1542px;top:55.9px;width:5.1px;height:5.1px;border-radius:50%;background:#757575"></div>
<!-- dropdown triangle -->
<svg class="a" style="left:1310px;top:370px" width="16" height="12" viewBox="1310 370 16 12"><path d="M1312 372.5 H1324 L1318 379 Z" fill="#fff"/></svg>
<!-- row checks -->
<svg class="a" style="left:70px;top:528px" width="24" height="24" viewBox="70 528 24 24">
 <circle cx="82.3" cy="540.2" r="10.8" fill="#58b06b"/>
 <path d="M78.4 540.1 L81.1 542.7 L86.8 537.3" stroke="#f4faf5" stroke-width="1.6" fill="none"/>
</svg>
<svg class="a" style="left:70px;top:605px" width="24" height="24" viewBox="70 528 24 24">
 <circle cx="82.3" cy="540.2" r="10.8" fill="#58b06b"/>
 <path d="M78.4 540.1 L81.1 542.7 L86.8 537.3" stroke="#f4faf5" stroke-width="1.6" fill="none"/>
</svg>
<div class="t" style="left:280.0px;top:34.4px;font-size:33.63px;line-height:33.63px;font-weight:normal;-webkit-text-stroke:1.14px;letter-spacing:0.51px;color:#1b1b1b">Florist San Diego</div>
<div class="t" style="left:360.0px;top:108.3px;font-size:21.01px;line-height:21.01px;font-weight:normal;letter-spacing:0.21px;color:#2645a0">www.landpage-preview.com/a1429957-9fa9-4d2b-9db6...</div>
<div class="t" style="left:1030.5px;top:109.8px;font-size:17.13px;line-height:17.13px;font-weight:normal;-webkit-text-stroke:0.58px;letter-spacing:0.87px;color:#2645a0">Change url</div>
<div class="t" style="left:1436.0px;top:41.2px;font-size:20.99px;line-height:20.99px;font-weight:normal;-webkit-text-stroke:0.88px;letter-spacing:-0.20px;color:#ffffff">Edit</div>
<div class="t" style="left:56.5px;top:222.7px;font-size:20.72px;line-height:20.72px;font-weight:normal;-webkit-text-stroke:0.70px;letter-spacing:0.83px;color:#757575">Dashboard</div>
<div class="t" style="left:222.0px;top:222.7px;font-size:20.72px;line-height:20.72px;font-weight:normal;-webkit-text-stroke:0.70px;letter-spacing:0.75px;color:#2b4aa3">Optimization</div>
<div class="t" style="left:404.0px;top:222.7px;font-size:20.72px;line-height:20.72px;font-weight:normal;-webkit-text-stroke:0.70px;letter-spacing:0.57px;color:#757575">JavaScript Code</div>
<div class="t" style="left:629.5px;top:222.7px;font-size:20.72px;line-height:20.72px;font-weight:normal;-webkit-text-stroke:0.70px;letter-spacing:0.67px;color:#757575">InfoBar</div>
<div class="t" style="left:767.0px;top:222.7px;font-size:20.72px;line-height:20.72px;font-weight:normal;-webkit-text-stroke:0.70px;letter-spacing:0.60px;color:#757575">Schedule</div>
<div class="t" style="left:919.0px;top:222.7px;font-size:20.72px;line-height:20.72px;font-weight:normal;-webkit-text-stroke:0.70px;letter-spacing:0.74px;color:#757575">Settings</div>
<div class="t" style="left:72.0px;top:351.8px;font-size:26.81px;line-height:26.81px;font-weight:normal;letter-spacing:0.03px;color:#111111">A/B test</div>
<div class="t" style="left:1343.5px;top:365.6px;font-size:21.27px;line-height:21.27px;font-weight:normal;-webkit-text-stroke:0.89px;letter-spacing:0.29px;color:#ffffff">Add new variant</div>
<div class="t" style="left:72.5px;top:457.5px;font-size:18.48px;line-height:18.48px;font-weight:normal;-webkit-text-stroke:0.33px;letter-spacing:-0.27px;color:#a3a3a3">Variant name</div>
<div class="t" style="left:548.5px;top:457.5px;font-size:18.48px;line-height:18.48px;font-weight:normal;-webkit-text-stroke:0.33px;letter-spacing:0.12px;color:#a3a3a3">Traffic split</div>
<div class="t" style="left:762.0px;top:457.5px;font-size:18.48px;line-height:18.48px;font-weight:normal;-webkit-text-stroke:0.33px;letter-spacing:0.12px;color:#a3a3a3">Visits</div>
<div class="t" style="left:1042.8px;top:457.5px;font-size:18.48px;line-height:18.48px;font-weight:normal;-webkit-text-stroke:0.33px;letter-spacing:-0.10px;color:#a3a3a3">Leads</div>
<div class="t" style="left:1324.5px;top:457.5px;font-size:18.48px;line-height:18.48px;font-weight:normal;-webkit-text-stroke:0.33px;letter-spacing:-0.14px;color:#a3a3a3">Conversion rate</div>
<div class="t" style="left:100.5px;top:530.8px;font-size:21.52px;line-height:21.52px;font-weight:normal;letter-spacing:-0.58px;color:#1c1c1c">Florist San Diego</div>
<div class="t" style="left:100.5px;top:605.8px;font-size:21.23px;line-height:21.23px;font-weight:normal;letter-spacing:-0.31px;color:#1c1c1c">Florist San Diego copy</div>
<div class="t" style="left:439.0px;top:534.7px;font-size:15.65px;line-height:15.65px;font-weight:normal;letter-spacing:-0.67px;color:#ffffff">MAIN</div>
<div class="t" style="left:547.5px;top:530.0px;font-size:22.03px;line-height:22.03px;font-weight:normal;letter-spacing:-0.40px;color:#1c1c1c">50%</div>
<div class="t" style="left:548.5px;top:606.9px;font-size:21.45px;line-height:21.45px;font-weight:normal;letter-spacing:0.20px;color:#1c1c1c">50</div>
<div class="t" style="left:616.0px;top:607.9px;font-size:20.29px;line-height:20.29px;font-weight:normal;letter-spacing:0.00px;color:#1c1c1c">%</div>
<div class="t" style="left:1375.0px;top:702.8px;font-size:21.34px;line-height:21.34px;font-weight:normal;-webkit-text-stroke:0.90px;letter-spacing:0.28px;color:#ffffff">Start the test</div>
<div class="a" id="rightgrad" style="left:1594px;top:0;width:6px;height:100px;background:linear-gradient(to right,rgba(240,240,240,0),#f0f0f0)"></div>
<div class="a" id="topgrad" style="left:0;top:0;width:1600px;height:6px;background:linear-gradient(#efefef,rgba(248,248,248,0))"></div>
<!-- arrow -->
<svg class="a" style="left:0;top:0" width="1600" height="816" viewBox="0 0 1600 816">
 <path d="M1527 523 A105.4 105.4 0 0 1 1541 675" stroke="#b07ff0" stroke-width="6.5" fill="none"/>
 <path d="M1528.2 662.1 L1552.9 687.4 L1514.9 699.6 Z" fill="#b07ff0"/>
</svg>

</body></html>
